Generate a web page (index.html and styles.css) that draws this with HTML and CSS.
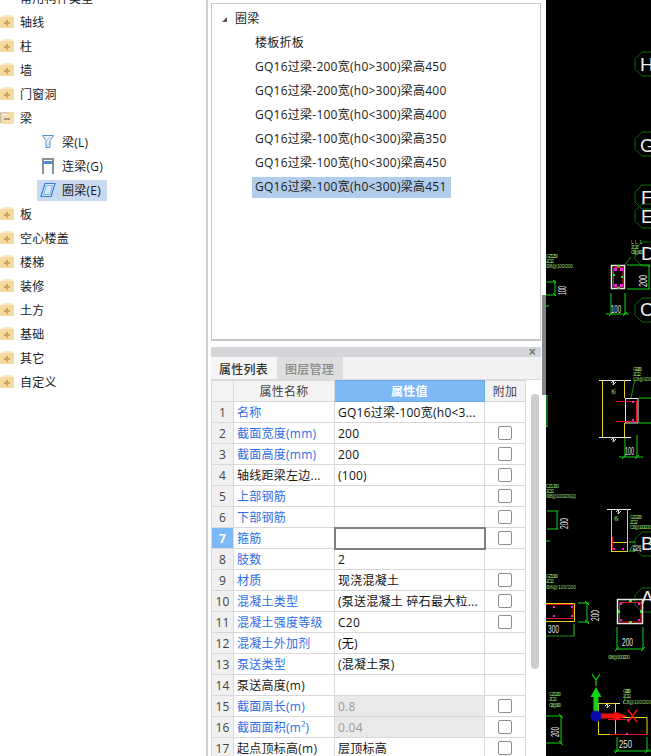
FILE: index.html
```html
<!DOCTYPE html>
<html lang="zh">
<head>
<meta charset="utf-8">
<title>属性列表</title>
<link rel="stylesheet" href="styles.css">
</head>
<body>
<svg class="defs" width="0" height="0" aria-hidden="true">
  <symbol id="fold" viewBox="0 0 15 14">
    <path d="M3 0h9l1 2H2z" fill="#f8e7c4"/>
    <path d="M0 2h14v11H0z" fill="#f4d99f"/>
    <path d="M6 5h2v2h2v2H8v2H6V9H4V7h2z" fill="#cfa25c"/>
  </symbol>
  <symbol id="open" viewBox="0 0 15 14">
    <path d="M7 1h7v11H7z" fill="#f4d99f"/>
    <path d="M0 1h7l1 2H1z" fill="#d8cdb6"/>
    <path d="M0 2h2v10H0z" fill="#cdbf9f"/>
    <path d="M1 4h14l-2 9H2z" fill="#f6dfae"/>
    <path d="M4 7h6v2H4z" fill="#a8977a"/>
  </symbol>
  <symbol id="oct" viewBox="-13 -13 26 26">
    <path d="M-12-5-5-12H5L12-5V5L5 12H-5L-12 5z" fill="none" stroke="#0a6a0a"/>
  </symbol>
</svg>
<div class="app">
  <nav class="tree">
    <div class="row cut"><span class="lbl">常用构件类型</span></div>
    <div class="row"><svg class="ficon"><use href="#fold"/></svg><span class="lbl">轴线</span></div>
    <div class="row"><svg class="ficon"><use href="#fold"/></svg><span class="lbl">柱</span></div>
    <div class="row"><svg class="ficon"><use href="#fold"/></svg><span class="lbl">墙</span></div>
    <div class="row"><svg class="ficon"><use href="#fold"/></svg><span class="lbl">门窗洞</span></div>
    <div class="row"><svg class="ficon"><use href="#open"/></svg><span class="lbl">梁</span></div>
    <div class="row sub">
      <svg class="sicon" viewBox="0 0 20 20"><path d="M2.5 3.5h11l-3.500 5v7h-4v-7z" fill="#eef4fb" stroke="#4d8fd6"/><path d="M6.500 9l3-4M7 14l2.500-3" stroke="#b6bec8"/></svg>
      <span class="lbl">梁(L)</span>
    </div>
    <div class="row sub">
      <svg class="sicon" viewBox="0 0 20 20"><path d="M3 18V3h10v15" fill="none" stroke="#8a9097" stroke-width="2"/><path d="M4 5h8v3H4z" fill="#4d8fd6"/></svg>
      <span class="lbl">连梁(G)</span>
    </div>
    <div class="row sub sel">
      <svg class="sicon" viewBox="0 0 20 20"><path d="M5 3.500h10l-4 13H1z" fill="#dbe8f7" stroke="#2f80d8" stroke-width="1.2"/><path d="M6.500 5.500h6l-2.800 9H3.800z" fill="none" stroke="#5a9be0" stroke-width=".7"/></svg>
      <span class="lbl">圈梁(E)</span>
    </div>
    <div class="row"><svg class="ficon"><use href="#fold"/></svg><span class="lbl">板</span></div>
    <div class="row"><svg class="ficon"><use href="#fold"/></svg><span class="lbl">空心楼盖</span></div>
    <div class="row"><svg class="ficon"><use href="#fold"/></svg><span class="lbl">楼梯</span></div>
    <div class="row"><svg class="ficon"><use href="#fold"/></svg><span class="lbl">装修</span></div>
    <div class="row"><svg class="ficon"><use href="#fold"/></svg><span class="lbl">土方</span></div>
    <div class="row"><svg class="ficon"><use href="#fold"/></svg><span class="lbl">基础</span></div>
    <div class="row"><svg class="ficon"><use href="#fold"/></svg><span class="lbl">其它</span></div>
    <div class="row"><svg class="ficon"><use href="#fold"/></svg><span class="lbl">自定义</span></div>
  </nav>

  <main class="mid">
    <section class="list">
      <div class="head"><i class="tri"></i><span>圈梁</span></div>
      <div class="item"><span>楼板折板</span></div>
      <div class="item"><span>GQ16过梁-200宽(h0&gt;300)梁高450</span></div>
      <div class="item"><span>GQ16过梁-200宽(h0&gt;300)梁高400</span></div>
      <div class="item"><span>GQ16过梁-100宽(h0&lt;300)梁高400</span></div>
      <div class="item"><span>GQ16过梁-100宽(h0&lt;300)梁高350</span></div>
      <div class="item"><span>GQ16过梁-100宽(h0&lt;300)梁高450</span></div>
      <div class="item on"><span>GQ16过梁-100宽(h0&lt;300)梁高451</span></div>
    </section>
    <section class="props">
      <div class="title"><span class="x">×</span></div>
      <div class="tabs"><span class="tab active">属性列表</span><span class="tab">图层管理</span></div>
      <div class="gridwrap">
        <table class="grid">
          <colgroup><col class="c1"><col class="c2"><col class="c3"><col class="c4"></colgroup>
          <thead><tr><th></th><th>属性名称</th><th class="hl">属性值</th><th>附加</th></tr></thead>
          <tbody>
            <tr><td class="n">1</td><td class="k">名称</td><td class="v">GQ16过梁-100宽(h0&lt;3...</td><td></td></tr>
            <tr><td class="n">2</td><td class="k">截面宽度(mm)</td><td class="v">200</td><td><i class="cb"></i></td></tr>
            <tr><td class="n">3</td><td class="k">截面高度(mm)</td><td class="v">200</td><td><i class="cb"></i></td></tr>
            <tr><td class="n">4</td><td class="p">轴线距梁左边...</td><td class="v">(100)</td><td><i class="cb"></i></td></tr>
            <tr><td class="n">5</td><td class="k">上部钢筋</td><td class="v"></td><td><i class="cb"></i></td></tr>
            <tr><td class="n">6</td><td class="k">下部钢筋</td><td class="v"></td><td><i class="cb"></i></td></tr>
            <tr><td class="n cur">7</td><td class="k">箍筋</td><td class="v edit"></td><td><i class="cb"></i></td></tr>
            <tr><td class="n">8</td><td class="k">肢数</td><td class="v">2</td><td></td></tr>
            <tr><td class="n">9</td><td class="k">材质</td><td class="v">现浇混凝土</td><td><i class="cb"></i></td></tr>
            <tr><td class="n">10</td><td class="k">混凝土类型</td><td class="v">(泵送混凝土 碎石最大粒...</td><td><i class="cb"></i></td></tr>
            <tr><td class="n">11</td><td class="k">混凝土强度等级</td><td class="v">C20</td><td><i class="cb"></i></td></tr>
            <tr><td class="n">12</td><td class="k">混凝土外加剂</td><td class="v">(无)</td><td></td></tr>
            <tr><td class="n">13</td><td class="k">泵送类型</td><td class="v">(混凝土泵)</td><td></td></tr>
            <tr><td class="n">14</td><td class="p">泵送高度(m)</td><td class="v"></td><td></td></tr>
            <tr><td class="n">15</td><td class="k">截面周长(m)</td><td class="v ro">0.8</td><td><i class="cb"></i></td></tr>
            <tr><td class="n">16</td><td class="k">截面面积(m²)</td><td class="v ro">0.04</td><td><i class="cb"></i></td></tr>
            <tr><td class="n">17</td><td class="p">起点顶标高(m)</td><td class="v">层顶标高</td><td><i class="cb"></i></td></tr>
          </tbody>
        </table>
        <div class="track"><div class="thumb"></div></div>
      </div>
    </section>
    <div class="splitter"></div>
  </main>

  <div class="canvas">
    <svg class="cad" viewBox="546 0 105 756" width="105" height="756">
      <use href="#oct" x="634" y="51" width="26" height="26"/>
      <use href="#oct" x="634" y="131" width="26" height="26"/>
      <use href="#oct" x="634" y="184" width="26" height="26"/>
      <use href="#oct" x="634" y="203" width="26" height="26"/>
      <use href="#oct" x="634" y="241" width="26" height="26"/>
      <use href="#oct" x="634" y="297" width="26" height="26"/>
      <use href="#oct" x="634" y="531" width="26" height="26"/>
      <use href="#oct" x="634" y="587" width="26" height="26"/>
      <g class="letters">
        <text x="640" y="71">H</text><text x="640" y="152">G</text><text x="641" y="204">F</text><text x="641" y="223">E</text>
        <text x="641" y="260">D</text><text x="640" y="316">C</text><text x="641" y="550">B</text><text x="641" y="604">A</text>
      </g>

      <g class="grn">
        <path d="M546 282h9M546 295h9M555 280v15M553 280l3 3M553 293l3 3M546 306h3"/>
        <path d="M611 293v21M625 293v21M606 314h23M609 316l4-4M623 316l4-4M627 265h23M627 289h23M649 265v24"/>
        <path d="M547 395v32M545 397l2-2M545 425l2 2M639 398h12M639 423h12"/>
        <path d="M625 437v20M637 435v22M619 457h24M622 459l4-4M635 459l4-4"/>
        <path d="M547 511h11M547 529h11M557 511v18M546 541h4M629 542h6M629 551h6"/>
        <path d="M578 603h11M578 622h11M587 603v19M585 601l4 4M585 620l4 4"/>
        <path d="M574 624v12M617 627v23M643 627v23M617 649h26M615 651l4-4M641 651l4-4"/>
        <path d="M546 716h16M546 743h16M561 716v27M559 714l4 4M559 741l4 4"/>
        <path d="M617 737v14M647 737v14M614 751h37M615 753l4-4M645 753l4-4"/>
      </g>
      <path class="dark" d="M625 265l6-8M631 398l4-19M629 552l4-7M623 704l2-6M546 636h28"/>
      <g class="wht">
        <rect x="611.500" y="265.500" width="13" height="23" class="bold"/>
        <rect x="625.500" y="398.500" width="12.500" height="24.500"/>
        <rect x="617.500" y="599.500" width="25" height="24" class="bold"/>
        <path d="M599 380.500h32M599 437.500h32M607 509.500h24M598 703.500h22"/>
        <path d="M611 383l3-3-1 5 3-3M611 440l3-3-1 5 3-3M616 512l3-3-1 5 3-3M605 706l3-3-1 5 3-3"/>
      </g>
      <g class="ylw">
        <path d="M602.500 380v57M624.500 380v18M624.500 423v14"/>
        <path d="M611.500 509v43M627.500 509v43M611 542.500h16M611 551.500h16"/>
        <path d="M546 603.500h28.500v18h-28.500"/>
        <path d="M615 703.500h-16.500v31h48.500v-17h-32M615.500 704v30"/>
      </g>
      <g class="red">
        <rect x="613.500" y="267.500" width="9.500" height="19.500" rx="1"/>
        <path d="M616 401.500h20.500v20h-20.500"/>
        <path d="M612.500 537v13"/>
        <path d="M546 604.500h27v14h-27"/>
        <path d="M619.500 602.500h21.500v19.500h-21.500z"/>
        <path d="M610 734.500h37M608 719.500h18"/>
      </g>
      <g class="mag">
        <rect x="614" y="268" width="3" height="3"/><rect x="620" y="268" width="3" height="3"/>
        <rect x="614" y="284" width="3" height="3"/><rect x="620" y="284" width="3" height="3"/>
        <rect x="632" y="401" width="2" height="2"/><rect x="632" y="419" width="2" height="2"/>
        <rect x="613" y="548" width="2" height="2"/><rect x="622" y="548" width="2" height="2"/>
        <rect x="553" y="606" width="2" height="2"/><rect x="553" y="615" width="2" height="2"/><rect x="571" y="606" width="2" height="2"/><rect x="571" y="615" width="2" height="2"/>
        <rect x="620" y="603" width="2" height="2"/><rect x="638" y="603" width="2" height="2"/><rect x="620" y="619" width="2" height="2"/><rect x="638" y="619" width="2" height="2"/>
        <rect x="627" y="719" width="2" height="2"/><rect x="626" y="733" width="2" height="2"/>
      </g>
      <g class="lime">
        <rect x="617" y="265" width="3" height="2"/><rect x="617" y="287" width="3" height="2"/>
        <rect x="629" y="600" width="3" height="2"/><rect x="629" y="621" width="3" height="2"/>
        <rect x="618" y="610" width="2" height="3"/><rect x="640" y="610" width="2" height="3"/>
        <rect x="613" y="274" width="2" height="2"/><rect x="621" y="276" width="2" height="2"/>
      </g>
      <g class="note">
        <text x="546" y="258" textLength="12">GZ1 250</text><text x="546" y="263" textLength="8">2C12</text><text x="546" y="268" textLength="27">Φ8@100/200</text>
        <text x="631" y="244" textLength="11">LL1</text><text x="631" y="249" textLength="8">2C12</text><text x="631" y="254" textLength="12">C8@100</text>
        <text x="633" y="371" textLength="9">GL1 200</text><text x="633" y="376" textLength="8">2C12</text><text x="633" y="381" textLength="18">C8@100</text>
        <text x="546" y="488" textLength="13">CZ1 300</text><text x="546" y="493" textLength="8">2C12</text><text x="546" y="498" textLength="30">Φ8@100/200(2)</text>
        <text x="630" y="519" textLength="12">GZ1 200</text><text x="630" y="524" textLength="8">2C12</text><text x="630" y="529" textLength="21">C8@100/200</text>
        <text x="546" y="578" textLength="12">GZ1 300</text><text x="546" y="583" textLength="8">2C12</text><text x="546" y="589" textLength="30">Φ8@100/200</text>
        <text x="608" y="659" textLength="22">Φ8@100/200</text>
        <text x="549" y="696" textLength="12">GZ1 200</text><text x="549" y="701" textLength="8">2C12</text><text x="549" y="707" textLength="12">C8@100</text>
        <text x="623" y="693" textLength="8">GZ1 250</text><text x="623" y="698" textLength="8">2C12</text><text x="623" y="704" textLength="28">C8@100/200</text>
      </g>
      <g class="tag">
        <text x="611" y="393" textLength="6">板</text>
        <text x="614" y="520" textLength="5">板</text>
      </g>
      <g class="dim">
        <text x="611" y="313" textLength="10" lengthAdjust="spacingAndGlyphs">100</text>
        <text x="625" y="455" textLength="9" lengthAdjust="spacingAndGlyphs">100</text>
        <text x="548" y="633" textLength="11" lengthAdjust="spacingAndGlyphs">300</text>
        <text x="622" y="646" textLength="11" lengthAdjust="spacingAndGlyphs">200</text>
        <text x="619" y="748" textLength="13" lengthAdjust="spacingAndGlyphs">250</text>
        <text transform="translate(566 295) rotate(-90)" textLength="9" lengthAdjust="spacingAndGlyphs">100</text>
        <text transform="translate(647 287) rotate(-90)" textLength="12" lengthAdjust="spacingAndGlyphs">200</text>
        <text transform="translate(568 529) rotate(-90)" textLength="11" lengthAdjust="spacingAndGlyphs">200</text>
        <text transform="translate(599 621) rotate(-90)" textLength="11" lengthAdjust="spacingAndGlyphs">200</text>
        <text transform="translate(559 737) rotate(-90)" textLength="10" lengthAdjust="spacingAndGlyphs">200</text>
        <text transform="translate(641 552) rotate(-90)" textLength="7" lengthAdjust="spacingAndGlyphs">150</text>
      </g>
      <g>
        <path class="ax-y" d="M596 712v-16"/>
        <path class="ax-yh" d="M596 687l5.500 10h-11z"/>
        <path class="ax-x" d="M600 716h15"/>
        <path class="ax-xh" d="M614 711.500l13 4.500-13 5z"/>
        <circle class="ax-o" cx="596" cy="716" r="5.500"/>
        <path class="ax-t" d="M592 674l4 6 4-6M596 680v6"/>
        <path class="ax-r" d="M628 710l9 12M637 710l-9 12"/>
      </g>
    </svg>
  </div>
</div>
</body>
</html>
```
FILE: styles.css
```css
* { box-sizing: border-box; }
html, body { margin: 0; padding: 0; background: #fff; }
body {
  width: 651px;
  height: 756px;
  overflow: hidden;
  font: 12px/16px "Open Sans", "Noto Sans CJK SC", sans-serif;
  letter-spacing: .25px;
  color: #1a1a1a;
}
.defs { display: block; height: 0; }
.app { display: flex; width: 651px; height: 756px; overflow: hidden; }

/* left tree */
.tree {
  width: 208px;
  flex: none;
  margin-top: -14px;
  border-right: 2px solid #cfcfcf;
}
.row { display: flex; align-items: center; height: 24px; padding: 2px 0 0 20px; position: relative; }
.ficon { position: absolute; left: 0; top: 5px; width: 15px; height: 14px; }
.row.sub { padding-left: 62px; }
.sub .sicon { position: absolute; left: 40px; top: 2px; width: 20px; height: 20px; z-index: 1; }
.sel::before {
  content: "";
  position: absolute;
  left: 37px;
  width: 70px;
  top: 2px;
  height: 21px;
  background: #c9daf0;
}
.lbl { position: relative; z-index: 1; }

/* middle column */
.mid {
  width: 338px;
  flex: none;
  padding: 3px 5px 0 3px;
  position: relative;
  background: #fff;
}
.list {
  height: 338px;
  border: 1px solid #c6c6c6;
  border-width: 1px 1px 2px 1px;
  padding-top: 3px;
  background: #fff;
}
.head { display: flex; align-items: center; height: 24px; padding-left: 4px; }
.tri {
  width: 0;
  height: 0;
  margin: 0 8px 0 6px;
  border-style: solid;
  border-width: 0 0 5px 5px;
  border-color: transparent transparent #555 transparent;
}
.item { display: flex; align-items: center; height: 24px; padding-left: 40px; }
.item span { display: block; padding: 0 3px; line-height: 20px; height: 21px; }
.item.on span { background: #b2cdeb; width: 199px; }

.props { margin-top: 6px; height: 409px; }
.title { height: 10px; background: #d3d5d8; position: relative; }
.x { position: absolute; right: 5px; top: -2px; font: 700 12px/14px "Liberation Sans", sans-serif; color: #777; }
.tabs { display: flex; height: 23px; background: #f2f2f2; border-bottom: 1px solid #dcdcdc; }
.tab { display: block; width: 66px; padding: 1px 0 0 8px; line-height: 23px; background: #dedede; color: #8a8a8a; font-weight: 500; }
.tab.active { background: #f5f5f5; color: #333; }
.gridwrap { display: flex; background: #fff; }
.grid {
  border-collapse: collapse;
  table-layout: fixed;
  width: 314px;
  flex: none;
}
.c1 { width: 22px; } .c2 { width: 101px; } .c3 { width: 150px; } .c4 { width: 41px; }
.grid th, .grid td {
  height: 21px;
  padding: 1px 3px 0;
  border: 1px solid #d8d8d8;
  white-space: nowrap;
  overflow: hidden;
  font-weight: 400;
  line-height: 18px;
}
.grid th { background: #f3f3f3; color: #444; text-align: center; padding-top: 2px; }
.grid th.hl { background: #7db9f7; color: #fff; font-weight: 700; border-color: #6aa7e8; }
.grid td.n { background: #f0f0f0; text-align: center; color: #444; padding: 1px 0 0; }
.grid td.cur { background: #7db9f7; color: #fff; font-weight: 700; }
.grid td:last-child { text-align: center; padding: 0; }
.k { color: #2c6ee6; }
.p { color: #1a1a1a; }
.v { color: #111; }
.grid td.ro { background: #e9e9e9; color: #999; }
.grid td.edit { border: 2px solid #7f7f7f; }
.cb {
  display: block;
  width: 14px;
  height: 14px;
  margin: 0 auto;
  background: #fff;
  border: 1px solid #8d8d8d;
  border-radius: 2px;
}
.track { flex: 1; padding: 14px 3px 0 5px; }
.thumb { width: 8px; height: 275px; background: #cdcdcd; border-radius: 4px; }
.splitter {
  position: absolute;
  right: 0;
  top: 295px;
  width: 4px;
  height: 100px;
  background: #7f8890;
}

/* CAD canvas */
.canvas { width: 105px; flex: none; background: #000; }
.cad { display: block; fill: none; letter-spacing: 0; }
.letters text { fill: #eee; font: 19px "Liberation Sans", sans-serif; }
.grn { stroke: #11d411; stroke-width: 1; }
.dark { stroke: #1a8a1a; stroke-width: 1; }
.wht { stroke: #e6e6e6; stroke-width: 1; }
.bold { stroke-width: 1.5; }
.ylw { stroke: #e6d21a; stroke-width: 1; }
.red { stroke: #e8101a; stroke-width: 1; }
.mag { fill: #f020d8; }
.lime { fill: #30f030; }
.note text { fill: #8ed46c; font: 5px "Liberation Sans", sans-serif; }
.tag text { fill: #8ed46c; font: 5px "Noto Sans CJK SC", sans-serif; }
.dim text { fill: #e8e8e8; font: 11px "Liberation Sans", sans-serif; }
.ax-y { stroke: #14d414; stroke-width: 5; }
.ax-yh { fill: #14d414; }
.ax-x { stroke: #f01010; stroke-width: 5; }
.ax-xh { fill: #f01010; }
.ax-o { fill: #0a0ab0; }
.ax-t { stroke: #14d414; stroke-width: 1.2; }
.ax-r { stroke: #f01010; stroke-width: 1.4; }
```
